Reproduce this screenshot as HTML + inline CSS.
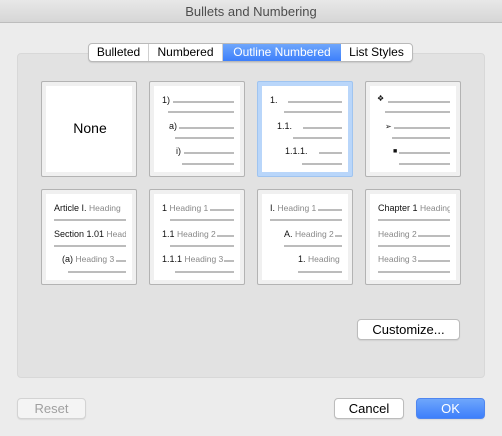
<!DOCTYPE html><html><head><style>
*{margin:0;padding:0;box-sizing:border-box}
body{width:502px;height:436px;background:#ececec;font-family:"Liberation Sans",sans-serif;position:relative;overflow:hidden}
.a{position:absolute}
.title{left:0;top:0;width:502px;height:23px;background:linear-gradient(#e8e8e8,#d6d6d6);border-bottom:1px solid #bdbdbd;text-align:center;font-size:13px;line-height:23px;color:#4d4d4d}
.panel{left:17px;top:53px;width:468px;height:325px;background:#e2e2e2;border:1px solid #d8d8d8;border-radius:4px}
.tabs{left:88px;top:43px;width:325px;height:19px;background:#fff;border:1px solid #b9b9b9;border-radius:4px;display:flex;font-size:12px;overflow:hidden;box-shadow:0 1px 1px rgba(0,0,0,.1)}
.tabs div{line-height:17px;text-align:center;border-right:1px solid #cfcfcf}
.tile{width:96px;height:96px;background:#f0f0f0;border:1px solid #b3b3b3;border-radius:2px}
.tile .in{position:absolute;left:4px;top:4px;right:4px;bottom:4px;background:#fff}
.sel{border:1px solid #9fc4f0;background:#b9d6fa}
.l{position:absolute;height:2px;background:#bcbcbc}
.t{position:absolute;font-size:9px;line-height:11px;color:#111;white-space:nowrap;z-index:2;background:#fff;padding-right:1px}
.g{color:#888;font-size:8.5px}
.btn{background:#fff;border:1px solid #bcbcbc;border-radius:4px;font-size:13px;text-align:center;line-height:19px;box-shadow:0 1px 1px rgba(0,0,0,.08)}
</style></head><body>
<div class="a title">Bullets and Numbering</div>
<div class="a panel"></div>
<div class="a tabs"><div style="width:60px">Bulleted</div><div style="width:74px">Numbered</div><div style="width:118px;background:linear-gradient(#6ea6fb,#3d7ffb);color:#fff;border-right:none">Outline Numbered</div><div style="width:71px;border-right:none">List Styles</div></div>

<div class="a tile" style="left:41px;top:81px"><div class="in"></div><div class="a" style="left:0;top:38px;width:96px;text-align:center;font-size:14px">None</div></div>

<div class="a tile" style="left:149px;top:81px"><div class="in"></div>
<div class="t" style="left:12px;top:13px">1)</div><div class="l" style="left:23px;width:61px;top:19px"></div><div class="l" style="left:18px;width:66px;top:29px"></div>
<div class="t" style="left:19px;top:39px">a)</div><div class="l" style="left:29px;width:55px;top:45px"></div><div class="l" style="left:25px;width:59px;top:55px"></div>
<div class="t" style="left:26px;top:64px">i)</div><div class="l" style="left:34px;width:50px;top:70px"></div><div class="l" style="left:32px;width:52px;top:81px"></div>
</div>

<div class="a tile sel" style="left:257px;top:81px"><div class="in"></div>
<div class="t" style="left:12px;top:13px">1.</div><div class="l" style="left:30px;width:54px;top:19px"></div><div class="l" style="left:26px;width:58px;top:29px"></div>
<div class="t" style="left:19px;top:39px">1.1.</div><div class="l" style="left:45px;width:39px;top:45px"></div><div class="l" style="left:35px;width:49px;top:55px"></div>
<div class="t" style="left:27px;top:64px">1.1.1.</div><div class="l" style="left:61px;width:23px;top:70px"></div><div class="l" style="left:44px;width:40px;top:81px"></div>
</div>

<div class="a tile" style="left:365px;top:81px"><div class="in"></div>
<div class="t" style="left:11px;top:11px;font-size:8px">❖</div><div class="l" style="left:22px;width:62px;top:19px"></div><div class="l" style="left:19px;width:65px;top:29px"></div>
<div class="t" style="left:19px;top:39px;font-size:8px">➢</div><div class="l" style="left:28px;width:56px;top:45px"></div><div class="l" style="left:26px;width:58px;top:55px"></div>
<div class="t" style="left:27px;top:64px;font-size:7px">■</div><div class="l" style="left:33px;width:51px;top:70px"></div><div class="l" style="left:33px;width:51px;top:81px"></div>
</div>

<div class="a tile" style="left:41px;top:189px;overflow:hidden"><div class="in"></div>
<div class="t" style="left:12px;top:13px;width:72px;overflow:hidden">Article I. <span class="g">Heading</span></div><div class="l" style="left:12px;width:72px;top:29px"></div>
<div class="t" style="left:12px;top:39px;width:72px;overflow:hidden">Section 1.01 <span class="g">Heading</span></div><div class="l" style="left:12px;width:72px;top:55px"></div>
<div class="t" style="left:20px;top:64px">(a) <span class="g">Heading 3</span></div><div class="l" style="left:74px;width:10px;top:70px"></div><div class="l" style="left:26px;width:58px;top:81px"></div>
</div>

<div class="a tile" style="left:149px;top:189px"><div class="in"></div>
<div class="t" style="left:12px;top:13px">1 <span class="g">Heading 1</span></div><div class="l" style="left:60px;width:24px;top:19px"></div><div class="l" style="left:20px;width:64px;top:29px"></div>
<div class="t" style="left:12px;top:39px">1.1 <span class="g">Heading 2</span></div><div class="l" style="left:66px;width:18px;top:45px"></div><div class="l" style="left:20px;width:64px;top:55px"></div>
<div class="t" style="left:12px;top:64px">1.1.1 <span class="g">Heading 3</span></div><div class="l" style="left:74px;width:10px;top:70px"></div><div class="l" style="left:25px;width:59px;top:81px"></div>
</div>

<div class="a tile" style="left:257px;top:189px"><div class="in"></div>
<div class="t" style="left:12px;top:13px">I. <span class="g">Heading 1</span></div><div class="l" style="left:60px;width:24px;top:19px"></div><div class="l" style="left:12px;width:72px;top:29px"></div>
<div class="t" style="left:26px;top:39px">A. <span class="g">Heading 2</span></div><div class="l" style="left:76px;width:8px;top:45px"></div><div class="l" style="left:26px;width:58px;top:55px"></div>
<div class="t" style="left:40px;top:64px;width:44px;overflow:hidden">1. <span class="g">Heading</span></div><div class="l" style="left:40px;width:44px;top:81px"></div>
</div>

<div class="a tile" style="left:365px;top:189px"><div class="in"></div>
<div class="t" style="left:12px;top:13px;width:72px;overflow:hidden">Chapter 1 <span class="g">Heading</span></div><div class="l" style="left:12px;width:72px;top:29px"></div>
<div class="t g" style="left:12px;top:39px">Heading 2</div><div class="l" style="left:52px;width:32px;top:45px"></div><div class="l" style="left:12px;width:72px;top:55px"></div>
<div class="t g" style="left:12px;top:64px">Heading 3</div><div class="l" style="left:52px;width:32px;top:70px"></div><div class="l" style="left:12px;width:72px;top:81px"></div>
</div>

<div class="a btn" style="left:357px;top:319px;width:103px;height:21px">Customize...</div>
<div class="a btn" style="left:17px;top:398px;width:69px;height:21px;background:#f4f4f4;color:#a0a0a0;border-color:#d3d3d3">Reset</div>
<div class="a btn" style="left:334px;top:398px;width:70px;height:21px">Cancel</div>
<div class="a btn" style="left:416px;top:398px;width:69px;height:21px;background:linear-gradient(#6ea6fb,#3d7ffb);border-color:#4f86f0;color:#fff">OK</div>
</body></html>
